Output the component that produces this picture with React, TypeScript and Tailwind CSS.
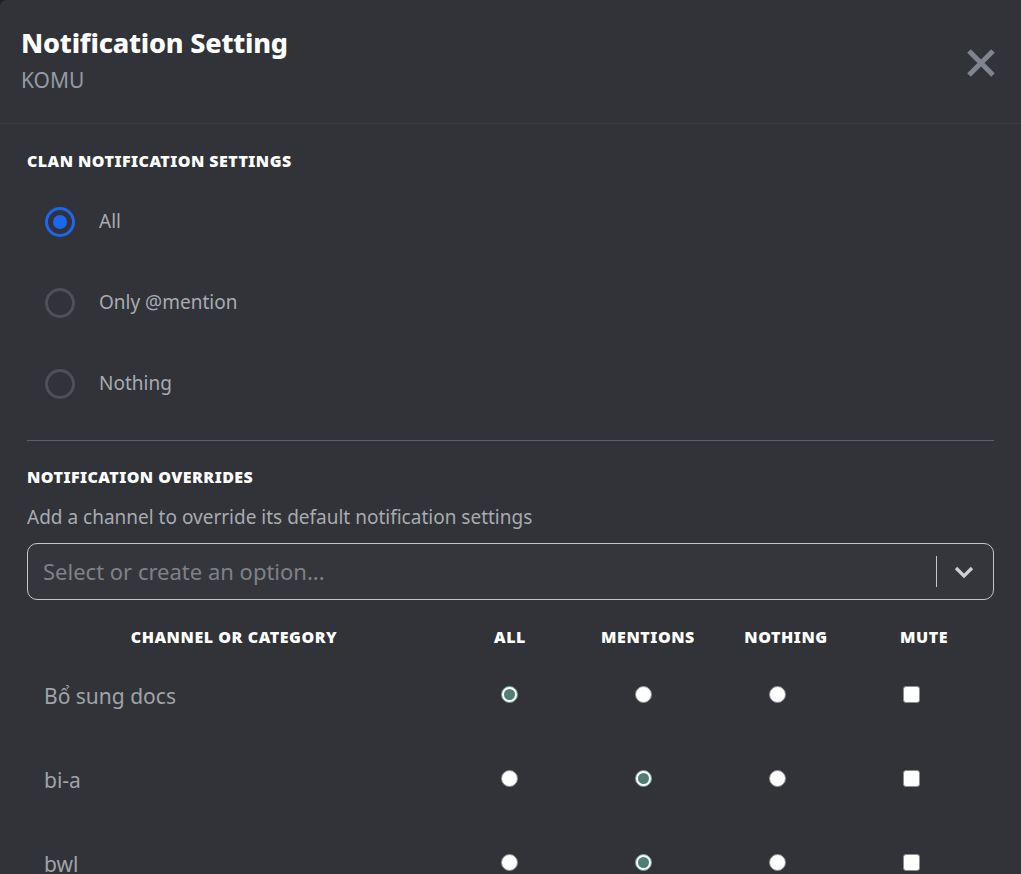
import React from "react";

const font = { fontFamily: '"Noto Sans", "Open Sans", sans-serif' };

function BigRadio({ checked, label }: { checked?: boolean; label: string }) {
  return (
    <div className="flex h-[81px] items-center">
      <div className="flex w-[75px] justify-center pr-[3px]">
        {checked ? (
          <span className="flex h-[30px] w-[30px] items-center justify-center rounded-full border-[3px] border-[#1c66f2]">
            <span className="h-[14px] w-[14px] rounded-full bg-[#1c66f2]" />
          </span>
        ) : (
          <span className="h-[30px] w-[30px] rounded-full border-[3px] border-[#4e5058]" />
        )}
      </div>
      <span className="text-[19px] text-[#a8abb2]">{label}</span>
    </div>
  );
}

function SmallRadio({ checked }: { checked?: boolean }) {
  return checked ? (
    <span className="flex h-[17px] w-[17px] items-center justify-center rounded-full border border-[#6a9a8d] bg-white">
      <span className="h-[11px] w-[11px] rounded-full bg-[#4f7e72]" />
    </span>
  ) : (
    <span className="h-[17px] w-[17px] rounded-full border border-[#8a8c90] bg-white" />
  );
}

function Check() {
  return <span className="h-[17px] w-[17px] rounded-[3px] border border-[#8a8c90] bg-white" />;
}

const rows = [
  { name: "Bổ sung docs", sel: 0 },
  { name: "bi-a", sel: 1 },
  { name: "bwl", sel: 1 },
];

export default function App() {
  return (
    <div className="h-[874px] w-[1021px] overflow-hidden bg-[#1e1f22]" style={font}>
      <div className="h-full w-full overflow-hidden rounded-tl-[6px] bg-[#313338]">
        {/* Header */}
        <div className="flex h-[124px] items-start justify-between border-b border-[#3b3d43] pl-[21px] pr-[24px] pt-[24px]">
          <div>
            <div className="text-[27px] font-extrabold leading-[38px] tracking-[-0.2px] text-white">
              Notification Setting
            </div>
            <div className="mt-[4px] text-[21px] leading-[28px] text-[#949ba4]">KOMU</div>
          </div>
          <svg width="32" height="32" viewBox="0 0 32 32" className="mt-[23px]">
            <path d="M4 4 L28 28 M28 4 L4 28" stroke="#80848e" strokeWidth="5" />
          </svg>
        </div>

        <div className="px-[27px]">
          <div className="mt-[27px] h-[20px] text-[16px] font-black leading-[20px] tracking-[0.45px] text-white">
            CLAN NOTIFICATION SETTINGS
          </div>
          <div className="mt-[10px] -ml-[3px]">
            <BigRadio checked label="All" />
            <BigRadio label="Only @mention" />
            <BigRadio label="Nothing" />
          </div>
          <div className="mt-[16px] h-px bg-[#5d5f66]" />

          <div className="mt-[26px] h-[20px] text-[16px] font-black leading-[20px] tracking-[0.45px] text-white">
            NOTIFICATION OVERRIDES
          </div>
          <div className="mt-[19px] h-[22px] text-[19px] leading-[22px] text-[#a8abb2]">
            Add a channel to override its default notification settings
          </div>
          <div className="mt-[15px] flex h-[57px] items-center rounded-[10px] border border-[#c4c6ca] bg-[#35363b] pl-[15px] pr-[14px]">
            <span className="flex-1 text-[22px] text-[#7f8187]">Select or create an option...</span>
            <span className="h-[31px] w-px bg-[#c4c6ca]" />
            <svg width="22" height="22" viewBox="0 0 22 22" className="ml-[16px] mr-[4px]">
              <path d="M3 7 L11 15 L19 7" stroke="#cfd0d3" strokeWidth="3.2" fill="none" />
            </svg>
          </div>

          <div className="mt-[27px] grid grid-cols-[414px_138px_138px_138px_138px] text-[16px] font-black tracking-[0.55px] text-white">
            <div className="h-[20px] text-center leading-[20px]">CHANNEL OR CATEGORY</div>
            <div className="text-center leading-[20px]">ALL</div>
            <div className="text-center leading-[20px]">MENTIONS</div>
            <div className="text-center leading-[20px]">NOTHING</div>
            <div className="text-center leading-[20px]">MUTE</div>
          </div>
          <div className="mt-[5px]">
            {rows.map((r) => (
              <div key={r.name} className="grid h-[84px] grid-cols-[415px_134px_134px_134px_134px] items-center">
                <div className="pl-[17px] pt-[6px] text-[21px] text-[#a0a3aa]">{r.name}</div>
                {[0, 1, 2].map((i) => (
                  <div key={i} className="flex justify-center">
                    <SmallRadio checked={r.sel === i} />
                  </div>
                ))}
                <div className="flex justify-center">
                  <Check />
                </div>
              </div>
            ))}
          </div>
        </div>
      </div>
    </div>
  );
}
